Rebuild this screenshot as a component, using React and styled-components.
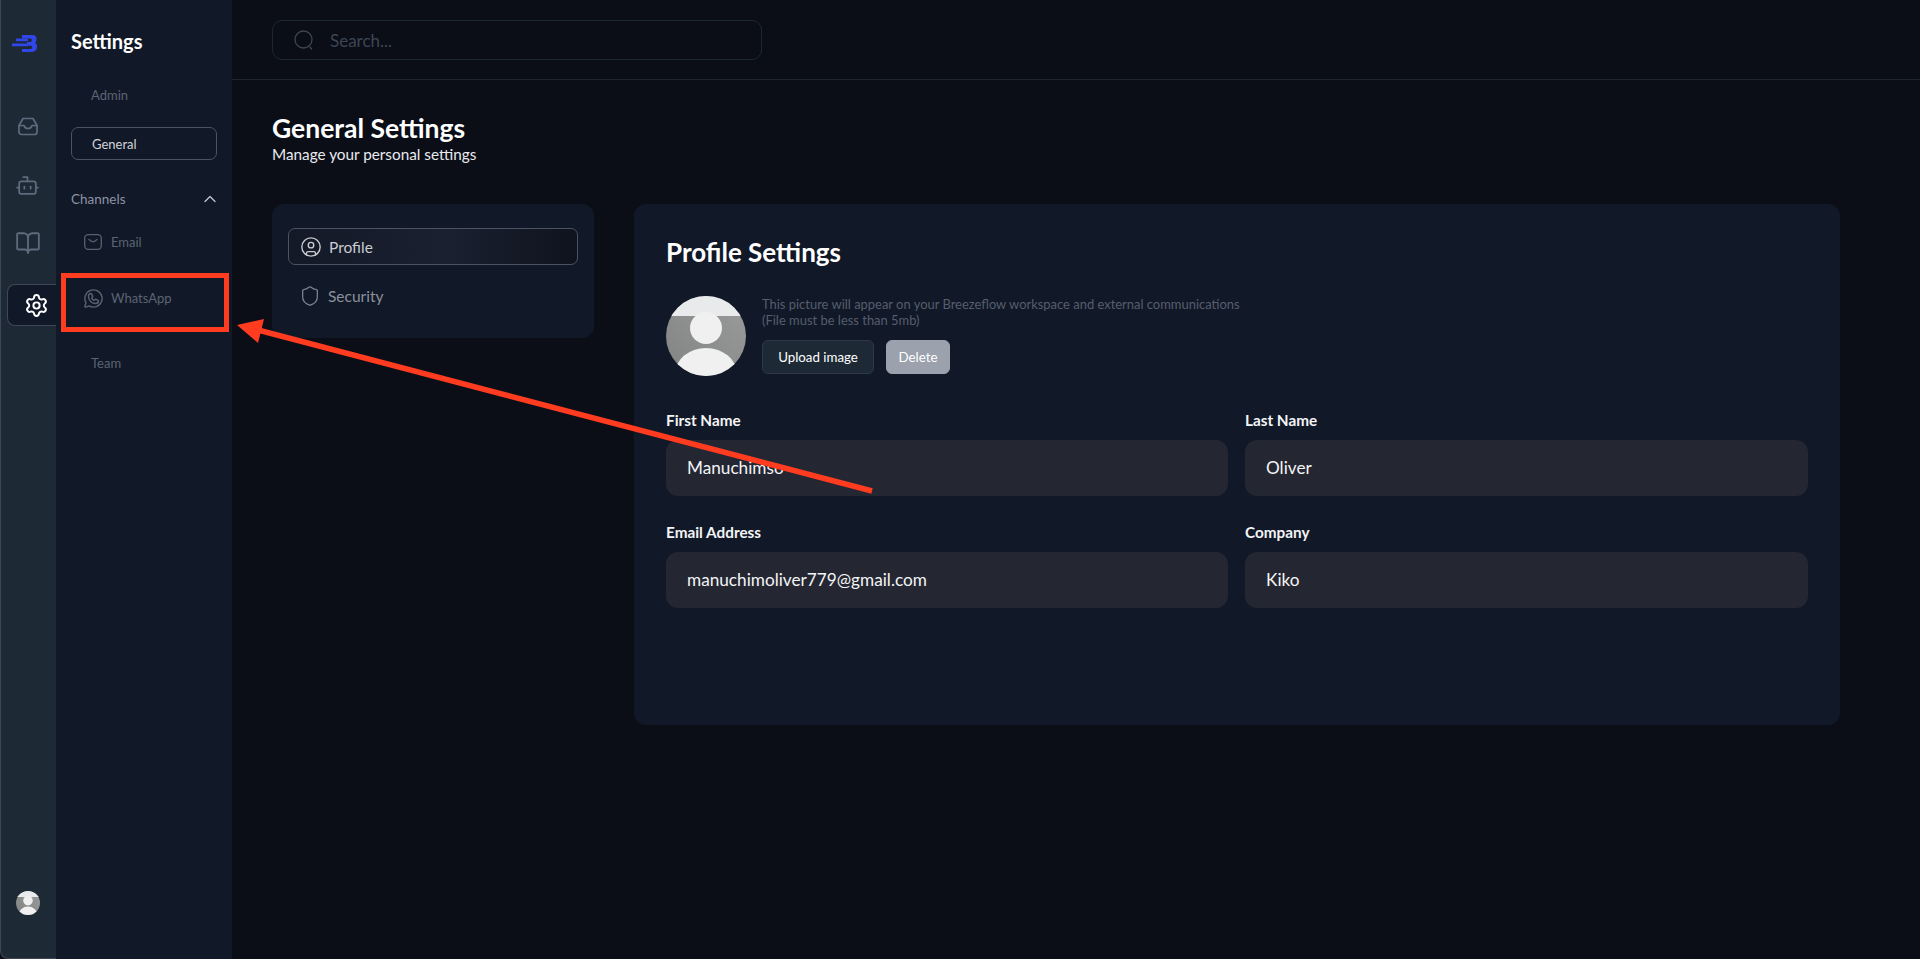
import React from 'react';
import styled, { createGlobalStyle } from 'styled-components';
import { Bot, BookOpen, Settings as Gear, ChevronUp, CircleUser, Shield } from 'lucide-react';
import { PiWhatsappLogo } from 'react-icons/pi';

const Global = createGlobalStyle`
  html, body { margin: 0; padding: 0; height: 100%; background: #0b0e17; }
  * { box-sizing: border-box; }
  body { font-family: Lato, "Noto Sans", sans-serif; }
`;

const Page = styled.div`
  position: relative;
  display: flex;
  width: 1920px;
  height: 959px;
  overflow: hidden;
  background: #0b0e17;
`;

const Rail = styled.nav`
  display: flex;
  flex-direction: column;
  align-items: center;
  width: 56px;
  padding: 30px 2px 0 0;
  background: #1e2936;
  border-left: 1px solid #3f4756;
  border-bottom: 1px solid #3f4756;
  border-bottom-left-radius: 8px;
`;

const LogoSlot = styled.div`
  display: flex;
  align-items: center;
  justify-content: center;
  height: 26px;
  margin: 0 6px 58px 0;
`;

const RailIcon = styled.div`
  display: flex;
  align-items: center;
  justify-content: center;
  height: 24px;
  margin-bottom: ${p => p.$gap}px;
  color: #5f6a7c;
`;

const RailActive = styled.div`
  display: flex;
  align-items: center;
  align-self: flex-end;
  width: 49px;
  height: 42px;
  margin-right: -2px;
  padding-left: 16px;
  background: #111827;
  border: 1px solid #3f4756;
  border-right: none;
  border-radius: 8px 0 0 8px;
  color: #fff;
`;

const RailAvatar = styled.div`
  display: flex;
  margin-top: auto;
  margin-bottom: 43px;
`;

const Sidebar = styled.aside`
  display: flex;
  flex-direction: column;
  width: 176px;
  padding: 29px 15px 0;
  background: #111827;
`;

const SideTitle = styled.h2`
  margin: 0 0 30px;
  font-size: 20px;
  line-height: 24px;
  font-weight: 700;
  color: #fff;
`;

const SideLink = styled.div`
  display: flex;
  align-items: center;
  gap: ${p => p.$gap || 9}px;
  height: 24px;
  margin-top: ${p => p.$top || 0}px;
  padding-left: ${p => p.$indent}px;
  font-size: 13px;
  color: #5c6473;
`;

const SideActive = styled.div`
  display: flex;
  align-items: center;
  height: 33px;
  margin-top: 20px;
  padding-left: 20px;
  border: 1px solid #4b5261;
  border-radius: 7px;
  font-size: 13px;
  color: #d1d5db;
`;

const SideGroup = styled.div`
  display: flex;
  align-items: center;
  justify-content: space-between;
  height: 20px;
  margin-top: 29px;
  font-size: 13.5px;
  color: #8b93a3;

  svg {
    margin-right: -3px;
  }
`;

const Main = styled.main`
  flex: 1;
  min-width: 0;
`;

const TopBar = styled.header`
  height: 80px;
  padding: 20px 40px 0;
  border-bottom: 1px solid #1e2530;
`;

const SearchBox = styled.div`
  display: flex;
  align-items: center;
  gap: 16px;
  width: 490px;
  height: 40px;
  padding-left: 21px;
  border: 1px solid #1d2633;
  border-radius: 10px;
  font-size: 17px;
  color: #3d4553;
`;

const Content = styled.div`
  padding: 33px 0 0 40px;
`;

const PageTitle = styled.h1`
  margin: 0;
  font-size: 26.5px;
  line-height: 30px;
  font-weight: 700;
  color: #fff;
`;

const PageSub = styled.p`
  margin: 2px 0 0;
  font-size: 15.3px;
  line-height: 18px;
  color: #e8eaee;
`;

const Columns = styled.div`
  display: flex;
  gap: 40px;
  margin-top: 41px;
`;

const TabsCard = styled.div`
  width: 322px;
  height: 134px;
  padding: 24px 16px;
  background: #111827;
  border-radius: 12px;
`;

const TabActive = styled.div`
  display: flex;
  align-items: center;
  gap: 7px;
  height: 37px;
  padding-left: 11px;
  border: 1px solid #4b5261;
  border-radius: 7px;
  background: linear-gradient(90deg, #131926, #1a2030 55%, #0f131e);
  font-size: 15.5px;
  color: #c9ccd2;
`;

const Tab = styled.div`
  display: flex;
  align-items: center;
  gap: 7px;
  height: 24px;
  margin-top: 19px;
  padding-left: 11px;
  font-size: 15.5px;
  color: #8a909c;
`;

const ProfileCard = styled.section`
  width: 1206px;
  height: 521px;
  padding: 33px 32px;
  background: #111827;
  border-radius: 12px;
`;

const CardTitle = styled.h2`
  margin: 0;
  font-size: 26px;
  line-height: 30px;
  font-weight: 700;
  color: #fff;
`;

const AvatarRow = styled.div`
  display: flex;
  gap: 16px;
  margin-top: 29px;
`;

const Hint = styled.p`
  margin: 0;
  font-size: 12.95px;
  line-height: 16px;
  color: #565e6d;
`;

const Buttons = styled.div`
  display: flex;
  gap: 12px;
  margin-top: 12px;
`;

const Button = styled.button`
  height: 34px;
  width: ${p => p.$w}px;
  padding: 0;
  border: 1px solid ${p => (p.$muted ? '#9ca1ae' : '#2e3948')};
  border-radius: 6px;
  background: ${p => (p.$muted ? '#9ca1ae' : '#1e2936')};
  font-family: inherit;
  font-size: 13.3px;
  color: #fff;
`;

const FormGrid = styled.div`
  display: grid;
  grid-template-columns: 562px 563px;
  column-gap: 17px;
  row-gap: 28px;
  margin-top: 36px;
`;

const Label = styled.div`
  margin-bottom: 12px;
  font-size: 15.3px;
  line-height: 16px;
  font-weight: 700;
  color: #f3f4f6;
`;

const Value = styled.div`
  display: flex;
  align-items: center;
  height: 56px;
  padding: 0 0 2px 21px;
  border-radius: 12px;
  background: #242732;
  font-size: 17.2px;
  color: #f3f4f6;
`;

const Annotation = styled.svg`
  position: absolute;
  top: 0;
  left: 0;
  pointer-events: none;
`;

const Logo = () => (
  <svg width="25" height="17" viewBox="0 0 25 17" fill="none">
    <path d="M10 0H20.5C23.5 0 24.5 2 24.5 4.2C24.5 5.8 24 7 23 7.7C24.3 8.4 25 9.8 25 11.5C25 14.7 23 17 19.5 17H10V14H18.5C19.7 14 20.2 13.3 20.2 12.3C20.2 11.3 19.700 10.700 18.500 10.700H15V6.900H18C19.200 6.900 19.800 6.200 19.800 5.200C19.800 4.200 19.200 3.400 18 3.400H10Z" fill="#2f46e8" />
    <path d="M4 3.400H16V6.200H4ZM0 8.600H16V11.200H0Z" fill="#2f46e8" />
  </svg>
);

const InboxIcon = () => (
  <svg width="20" height="19" viewBox="0 0 20 19" fill="none" stroke="currentColor" strokeWidth="1.7" strokeLinejoin="round" strokeLinecap="round">
    <path d="M5 1.5H15L19 8.5V15C19 16.4 18 17.5 16.5 17.5H3.5C2 17.5 1 16.4 1 15V8.5Z" />
    <path d="M1 8.5H6C6.5 10.5 8 11.5 10 11.5C12 11.5 13.5 10.5 14 8.5H19" />
  </svg>
);

const MailIcon = () => (
  <svg width="18" height="16" viewBox="0 0 18 16" fill="none" stroke="#59616f" strokeWidth="1.3" strokeLinecap="round" strokeLinejoin="round">
    <rect x="0.7" y="0.7" width="16.6" height="14.6" rx="3.5" />
    <path d="M5 5.5C6.5 7 8 7.8 9 7.8C10 7.8 11.5 7 13 5.5" />
  </svg>
);

const SearchIcon = () => (
  <svg width="20" height="20" viewBox="0 0 20 20" fill="none" stroke="#3d4553" strokeWidth="1.3" strokeLinecap="round">
    <circle cx="9.5" cy="9.5" r="8.5" />
    <path d="M16 17L17.5 19" />
  </svg>
);

const UserAvatar = ({ size }) => {
  const id = `clip${size}`;
  return (
    <svg width={size} height={size} viewBox="0 0 80 80">
      <defs>
        <clipPath id={id}><circle cx="40" cy="40" r="40" /></clipPath>
        <linearGradient id={`${id}g`} x1="0" y1="1" x2="1" y2="0">
          <stop offset="0" stopColor="#828483" />
          <stop offset="1" stopColor="#9a9b9b" />
        </linearGradient>
      </defs>
      <g clipPath={`url(#${id})`}>
        <rect width="80" height="80" fill={`url(#${id}g)`} />
        <rect width="80" height="20" fill="#e9eaec" />
        <circle cx="40" cy="32" r="16" fill="#f0f0f0" />
        <ellipse cx="40" cy="78" rx="31" ry="26" fill="#f0f0f0" />
      </g>
    </svg>
  );
};

const fields = [
  { label: 'First Name', value: 'Manuchimso' },
  { label: 'Last Name', value: 'Oliver' },
  { label: 'Email Address', value: 'manuchimoliver779@gmail.com' },
  { label: 'Company', value: 'Kiko' },
];

export default function App() {
  return (
    <Page>
      <Global />
      <Rail>
        <LogoSlot><Logo /></LogoSlot>
        <RailIcon $gap={35}><InboxIcon /></RailIcon>
        <RailIcon $gap={34}><Bot size={25} strokeWidth={1.7} /></RailIcon>
        <RailIcon $gap={29}><BookOpen size={26} strokeWidth={1.7} /></RailIcon>
        <RailActive><Gear size={25} strokeWidth={1.9} /></RailActive>
        <RailAvatar><UserAvatar size={24} /></RailAvatar>
      </Rail>
      <Sidebar>
        <SideTitle>Settings</SideTitle>
        <SideLink $indent={20}>Admin</SideLink>
        <SideActive>General</SideActive>
        <SideGroup>
          Channels
          <ChevronUp size={20} strokeWidth={1.5} color="#c5c9d0" />
        </SideGroup>
        <SideLink $indent={13} $top={21}><MailIcon />Email</SideLink>
        <SideLink $indent={11} $top={32} $gap={6}><PiWhatsappLogo size={23} color="#59616f" />WhatsApp</SideLink>
        <SideLink $indent={20} $top={41}>Team</SideLink>
      </Sidebar>
      <Main>
        <TopBar>
          <SearchBox><SearchIcon />Search...</SearchBox>
        </TopBar>
        <Content>
          <PageTitle>General Settings</PageTitle>
          <PageSub>Manage your personal settings</PageSub>
          <Columns>
            <TabsCard>
              <TabActive><CircleUser size={22} strokeWidth={1.5} />Profile</TabActive>
              <Tab><Shield size={22} strokeWidth={1.4} color="#7c8494" />Security</Tab>
            </TabsCard>
            <ProfileCard>
              <CardTitle>Profile Settings</CardTitle>
              <AvatarRow>
                <UserAvatar size={80} />
                <div>
                  <Hint>This picture will appear on your Breezeflow workspace and external communications</Hint>
                  <Hint>(File must be less than 5mb)</Hint>
                  <Buttons>
                    <Button $w={112}>Upload image</Button>
                    <Button $w={64} $muted>Delete</Button>
                  </Buttons>
                </div>
              </AvatarRow>
              <FormGrid>
                {fields.map(f => (
                  <div key={f.label}>
                    <Label>{f.label}</Label>
                    <Value>{f.value}</Value>
                  </div>
                ))}
              </FormGrid>
            </ProfileCard>
          </Columns>
        </Content>
      </Main>
      <Annotation width="1920" height="959" viewBox="0 0 1920 959" fill="none">
        <rect x="63.5" y="275.5" width="163" height="54" stroke="#ff3b20" strokeWidth="5" />
        <path d="M872 491L258 330" stroke="#ff3b20" strokeWidth="5.5" />
        <path d="M237 325L264 319L258 343Z" fill="#ff3b20" />
      </Annotation>
    </Page>
  );
}
